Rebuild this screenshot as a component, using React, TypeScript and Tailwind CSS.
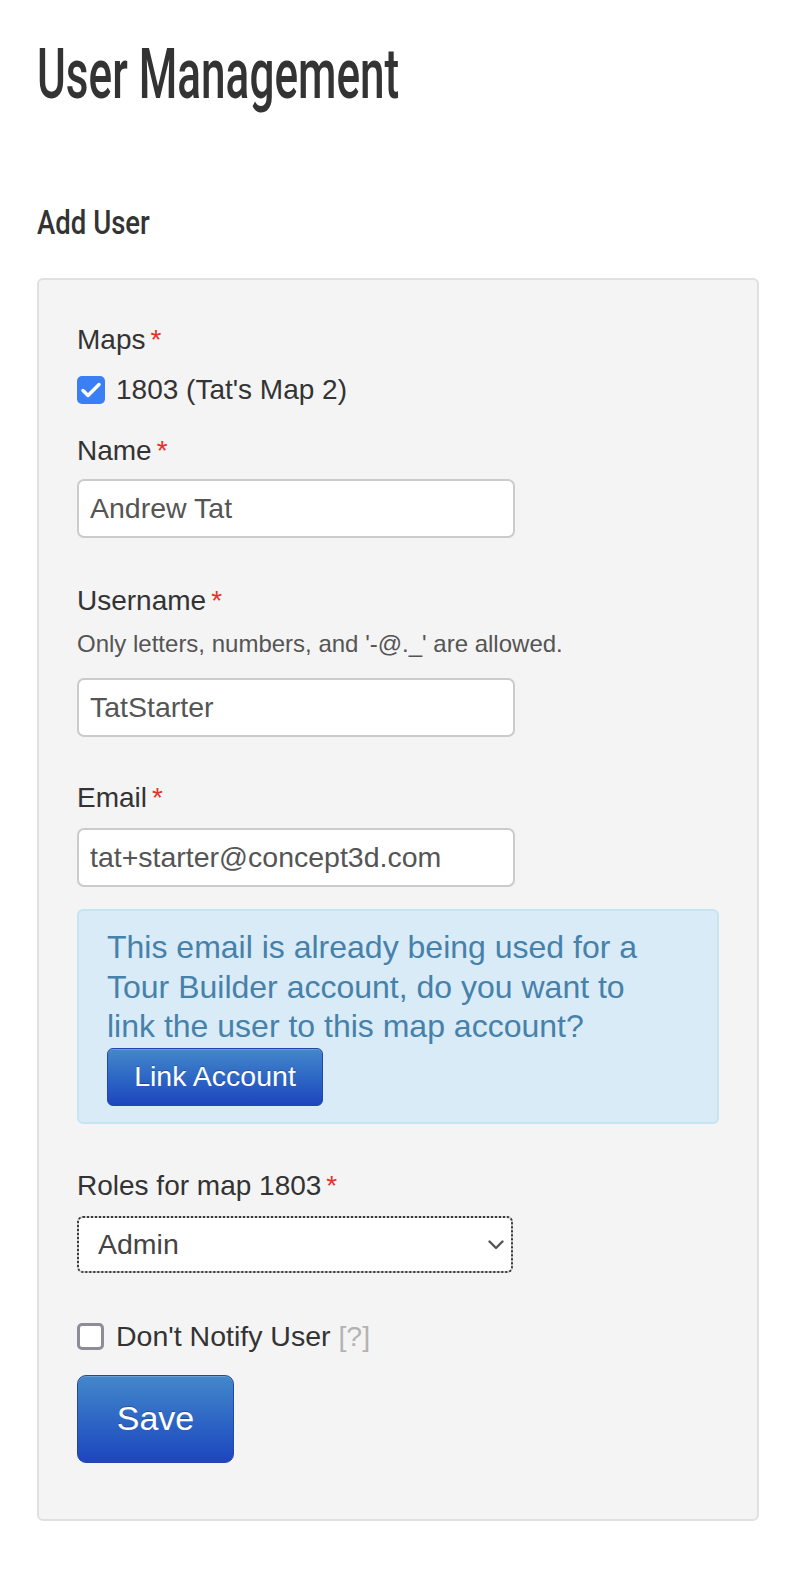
import { useState } from 'react';

function Star() {
  return <span className="ml-[5px] text-[28px] text-[#e4322b]">*</span>;
}

function CheckBox({ checked, size }: { checked: boolean; size: number }) {
  if (checked) {
    return (
      <div
        className="flex items-center justify-center rounded-[5px] bg-[#3b7ff5]"
        style={{ width: size, height: size }}
      >
        <svg width={size} height={size} viewBox="0 0 28 28" fill="none">
          <path
            d="M6 14.5 L11 19.5 L22 8.5"
            stroke="white"
            strokeWidth="3.5"
            strokeLinecap="round"
            strokeLinejoin="round"
          />
        </svg>
      </div>
    );
  }
  return (
    <div
      className="rounded-[5px] border-[3px] border-[#8e8c98] bg-white"
      style={{ width: size, height: size }}
    />
  );
}

export default function App() {
  const [mapChecked, setMapChecked] = useState(true);
  const [noNotify, setNoNotify] = useState(false);

  return (
    <div className="min-h-screen bg-white font-['Liberation_Sans',Arial,sans-serif] text-[#333]">
      <div className="ml-[37px] w-[722px] pt-[34px] pb-[59px]">
        <h1 className="origin-left scale-x-[0.63] whitespace-nowrap font-['Roboto',sans-serif] text-[70px] leading-[80px] font-medium text-[#333]">
          User Management
        </h1>
        <h2 className="mt-[88px] origin-left scale-x-[0.81] whitespace-nowrap font-['Roboto',sans-serif] text-[34px] leading-[40px] font-medium text-[#333]">
          Add User
        </h2>

        <form
          onSubmit={(e) => e.preventDefault()}
          className="mt-[36px] rounded-[6px] border-2 border-[#e0e0e0] bg-[#f4f4f4] pl-[38px] pt-[44px] pb-[56px]"
        >
          {/* Maps */}
          <label className="block text-[28px] leading-[32px]">
            Maps
            <Star />
          </label>
          <div
            className="mt-[20px] flex h-[28px] cursor-pointer items-center gap-[11px]"
            onClick={() => setMapChecked(!mapChecked)}
          >
            <CheckBox checked={mapChecked} size={28} />
            <span className="text-[28px] leading-[28px]">1803 (Tat's Map 2)</span>
          </div>

          {/* Name */}
          <label className="mt-[31px] block text-[28px] leading-[32px]">
            Name
            <Star />
          </label>
          <input
            defaultValue="Andrew Tat"
            className="mt-[12px] block h-[59px] w-[438px] rounded-[7px] border-2 border-[#cbcbcb] bg-white px-[11px] text-[28.5px] text-[#555] outline-none"
          />

          {/* Username */}
          <label className="mt-[47px] block text-[28px] leading-[32px]">
            Username
            <Star />
          </label>
          <p className="mt-[13px] text-[24px] leading-[28px] text-[#555]">
            Only letters, numbers, and '-@._' are allowed.
          </p>
          <input
            defaultValue="TatStarter"
            className="mt-[20px] block h-[59px] w-[438px] rounded-[7px] border-2 border-[#cbcbcb] bg-white px-[11px] text-[28.5px] text-[#555] outline-none"
          />

          {/* Email */}
          <label className="mt-[45px] block text-[28px] leading-[32px]">
            Email
            <Star />
          </label>
          <input
            defaultValue="tat+starter@concept3d.com"
            className="mt-[14px] block h-[59px] w-[438px] rounded-[7px] border-2 border-[#cbcbcb] bg-white px-[11px] text-[28.5px] text-[#555] outline-none"
          />

          {/* Alerta de cuenta existente */}
          <div className="mt-[22px] w-[642px] rounded-[6px] border-2 border-[#c4e5f1] bg-[#d9ebf6] pl-[28px] pt-[17px] pb-[16px]">
            <p className="w-[560px] text-[32px] leading-[39.5px] text-[#4681ab]">
              This email is already being used for a Tour Builder account, do you want to link the user to
              this map account?
            </p>
            <button
              type="button"
              className="mt-[1px] block h-[58px] w-[216px] rounded-[6px] border border-[#2346a8] bg-linear-to-b from-[#4487ca] to-[#1f44bf] text-[28.5px] text-white shadow-[inset_0_1px_0_rgba(255,255,255,0.2)] [text-shadow:0_-1px_0_rgba(0,0,0,0.25)]"
            >
              Link Account
            </button>
          </div>

          {/* Roles */}
          <label className="mt-[46px] block text-[28px] leading-[32px]">
            Roles for map 1803
            <Star />
          </label>
          <div className="relative mt-[14px] w-[436px]">
            <select
              defaultValue="admin"
              className="block h-[57px] w-full appearance-none rounded-[6px] border-2 border-[#c9c9c9] bg-white pl-[19px] text-[28.5px] text-[#444] outline-2 -outline-offset-2 outline-dotted outline-[#3a3a3a]"
            >
              <option value="admin">Admin</option>
              <option value="editor">Editor</option>
              <option value="viewer">Viewer</option>
            </select>
            <svg
              className="pointer-events-none absolute right-[9px] top-[24px]"
              width="16"
              height="10"
              viewBox="0 0 16 10"
              fill="none"
            >
              <path
                d="M1.5 1.5 L8 8 L14.5 1.5"
                stroke="#555"
                strokeWidth="2.4"
                strokeLinecap="round"
                strokeLinejoin="round"
              />
            </svg>
          </div>

          {/* No notificar */}
          <div
            className="mt-[50px] flex h-[27px] cursor-pointer items-center gap-[12px]"
            onClick={() => setNoNotify(!noNotify)}
          >
            <CheckBox checked={noNotify} size={27} />
            <span className="text-[28.5px] leading-[27px]">
              Don't Notify User <span className="text-[#b3b3b3]">[?]</span>
            </span>
          </div>

          {/* Botón */}
          <button
            type="submit"
            className="mt-[25px] block h-[88px] w-[157px] rounded-[9px] border border-[#2346a8] bg-linear-to-b from-[#4487ca] to-[#1f44bf] text-[34px] text-white shadow-[inset_0_1px_0_rgba(255,255,255,0.2)] [text-shadow:0_-1px_0_rgba(0,0,0,0.25)]"
          >
            Save
          </button>
        </form>
      </div>
    </div>
  );
}
